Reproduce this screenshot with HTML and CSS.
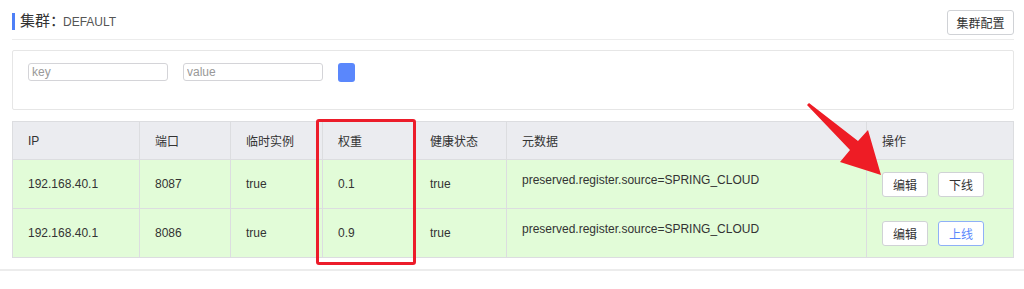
FILE: index.html
```html
<!DOCTYPE html>
<html lang="zh-CN">
<head>
    <meta charset="UTF-8">
    <meta name="viewport" content="width=device-width, initial-scale=1.0">
    <title>集群 DEFAULT</title>
    <link rel="stylesheet" href="styles.css">
</head>
<body>
    <div class="page">
        <!-- Cluster header -->
        <div class="cluster-head">
            <div class="cluster-title">
                <span class="title-main">集群：</span>
                <span class="title-sub">DEFAULT</span>
            </div>
            <button class="btn btn-config">集群配置</button>
        </div>

        <!-- Metadata filter -->
        <div class="filter-box">
            <input class="filter-input" type="text" placeholder="key">
            <input class="filter-input" type="text" placeholder="value">
            <span class="filter-add"></span>
        </div>

        <!-- Instance table -->
        <div class="table-wrap">
            <table class="inst-table">
                <colgroup>
                    <col style="width:127px"><col style="width:91px"><col style="width:92px">
                    <col style="width:92px"><col style="width:92px"><col style="width:360px"><col style="width:147px">
                </colgroup>
                <thead>
                    <tr><th>IP</th><th>端口</th><th>临时实例</th><th>权重</th><th>健康状态</th><th>元数据</th><th>操作</th></tr>
                </thead>
                <tbody>
                    <tr>
                        <td>192.168.40.1</td><td>8087</td><td>true</td><td>0.1</td><td>true</td>
                        <td class="meta">preserved.register.source=SPRING_CLOUD</td>
                        <td class="ops"><button class="btn btn-sm">编辑</button><button class="btn btn-sm">下线</button></td>
                    </tr>
                    <tr>
                        <td>192.168.40.1</td><td>8086</td><td>true</td><td>0.9</td><td>true</td>
                        <td class="meta">preserved.register.source=SPRING_CLOUD</td>
                        <td class="ops"><button class="btn btn-sm">编辑</button><button class="btn btn-sm btn-online">上线</button></td>
                    </tr>
                </tbody>
            </table>
            <!-- annotation overlays -->
            <div class="mark-box"></div>
            <svg class="mark-arrow" width="100" height="90" viewBox="0 0 100 90">
                <path d="M17 9 L15 11 L58 56 L48 68 L89 81 L76 36 L66 47 Z" fill="#ee1c25"/>
            </svg>
        </div>
        <div class="bottom-line"></div>
    </div>
</body>
</html>
```

FILE: styles.css
```css
/* ------ Base ------ */
*,*::before,*::after{box-sizing:border-box;margin:0;padding:0;}
body{
    font-family:"Liberation Sans","Noto Sans CJK SC",sans-serif;
    font-size:12px;
    color:#333;
    background:#fff;
    width:1024px;
    height:289px;
    overflow:hidden;
}
.page{padding:0 10px 0 12px;}

/* ------ Header ------ */
.cluster-head{
    display:flex;
    justify-content:space-between;
    align-items:flex-start;
    height:40px;
    padding-top:10px;
    border-bottom:1px solid #ececec;
}
.cluster-title{
    display:flex;
    align-items:baseline;
    margin-top:3px;
    padding-left:5px;
    border-left:3px solid #4e80f7;
    line-height:15px;
}
.title-main{font-size:15px;color:#333;}
.title-sub{font-size:12px;color:#555;margin-left:-2px;}
.btn{
    font-family:inherit;
    background:#fff;
    border:1px solid #d0d2d6;
    border-radius:3px;
    color:#333;
    cursor:pointer;
}
.btn-config{height:25px;width:67px;font-size:12px;}

/* ------ Filter ------ */
.filter-box{
    display:flex;
    align-items:flex-start;
    gap:15px;
    margin-top:10px;
    height:60px;
    padding:12px 15px;
    border:1px solid #e6e6e6;
    border-radius:2px;
}
.filter-input{
    width:140px;
    height:18px;
    padding:0 3px;
    border:1px solid #d4d4d8;
    border-radius:3px;
    font-family:inherit;
    font-size:12px;
    color:#333;
}
.filter-input::placeholder{color:#999;}
.filter-add{
    width:17px;
    height:19px;
    border-radius:3px;
    background:#5a87fc;
}

/* ------ Table ------ */
.table-wrap{position:relative;margin-top:11px;}
.inst-table{
    width:1001px;
    table-layout:fixed;
    border-collapse:collapse;
}
.inst-table th,.inst-table td{
    border:1px solid #dcdde0;
    padding:0 15px;
    text-align:left;
    font-weight:normal;
    white-space:nowrap;
}
.inst-table th{height:38px;background:#ebecf0;color:#333;}
.inst-table td{height:49px;background:#e2fcd8;color:#333;}
.inst-table td.meta{padding-bottom:8px;}
.ops{font-size:0;}
.btn-sm{width:46px;height:25px;font-size:12px;margin-right:10px;vertical-align:middle;}
.btn-online{border-color:#8fb0f7;color:#5a87fc;}

/* annotation overlays */
.mark-box{
    position:absolute;
    left:304px;
    top:-2px;
    width:100px;
    height:146px;
    border:3px solid #ec1c2a;
    border-radius:3px;
    pointer-events:none;
}
.mark-arrow{position:absolute;left:780px;top:-27px;pointer-events:none;}

.bottom-line{height:2px;background:#ececec;margin:11px -10px 0 -12px;}
```
